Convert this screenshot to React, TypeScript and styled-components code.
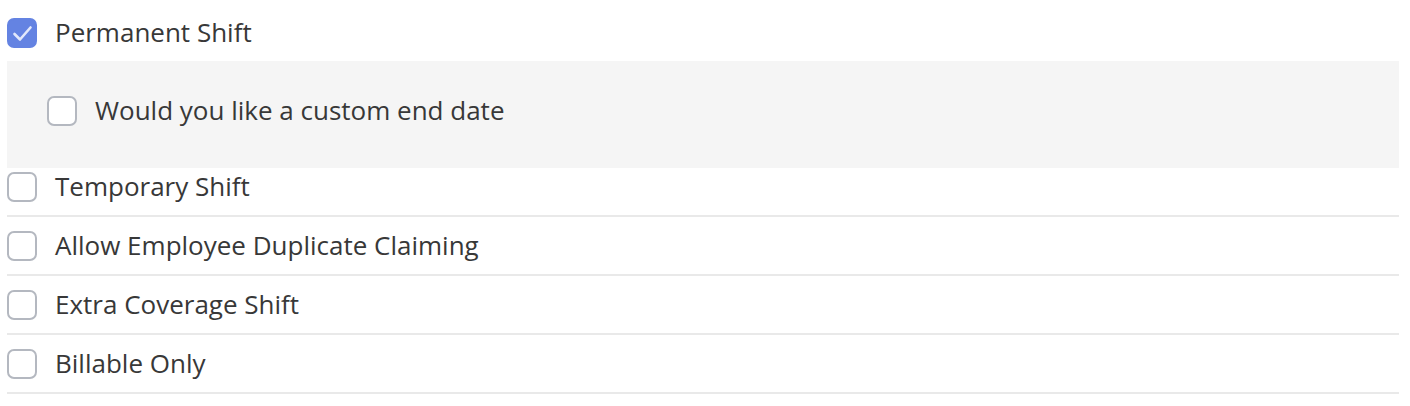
import styled, { createGlobalStyle } from "styled-components";

const GlobalStyle = createGlobalStyle`
  body {
    margin: 0;
    background: #ffffff;
    font-family: "Open Sans", "Liberation Sans", sans-serif;
    color: #383838;
  }
`;

const CheckIcon = () => (
  <svg width="26" height="26" viewBox="0 0 26 26" fill="none">
    <path d="M5.5 14 L11 19.5 L21.5 7.5" stroke="#e2e8fb" strokeWidth="2.6" strokeLinecap="round" strokeLinejoin="round" />
  </svg>
);

const Box = ({ checked }: { checked?: boolean }) => (
  <StyledBox $checked={checked}>{checked && <CheckIcon />}</StyledBox>
);

const Option = ({ label, checked, divider }: { label: string; checked?: boolean; divider?: boolean }) => (
  <StyledOption $divider={divider}>
    <Box checked={checked} />
    <Label>{label}</Label>
  </StyledOption>
);

export default function App() {
  return (
    <>
      <GlobalStyle />
      <StyledList>
        <TopRow>
          <Box checked />
          <Label>Permanent Shift</Label>
        </TopRow>
        <Panel>
          <Box />
          <Label>Would you like a custom end date</Label>
        </Panel>
        <FirstOption>
          <Box />
          <Label>Temporary Shift</Label>
        </FirstOption>
        <Option label="Allow Employee Duplicate Claiming" divider />
        <Option label="Extra Coverage Shift" divider />
        <Option label="Billable Only" divider />
      </StyledList>
    </>
  );
}

const StyledList = styled.div`
  margin-left: 7px;
  width: 1392px;
  display: flex;
  flex-direction: column;
`;

const Row = styled.div`
  display: flex;
  align-items: center;
  gap: 18px;
`;

const TopRow = styled(Row)`
  padding: 18px 0 13px;
`;

const Panel = styled(Row)`
  background: #f5f5f5;
  height: 99px;
  padding: 0 0 8px 40px;
`;

const FirstOption = styled(Row)`
  padding: 4px 0 13px;
  border-bottom: 2px solid #e9e9e9;
`;

const StyledOption = styled(Row)<{ $divider?: boolean }>`
  padding: 14px 0 13px;
  border-bottom: ${(p) => (p.$divider ? "2px solid #e9e9e9" : "none")};
`;

const StyledBox = styled.span<{ $checked?: boolean }>`
  box-sizing: border-box;
  width: 30px;
  height: 30px;
  flex-shrink: 0;
  border-radius: 7px;
  border: 2px solid ${(p) => (p.$checked ? "#6483e2" : "#b4b8c0")};
  background: ${(p) => (p.$checked ? "#6483e2" : "#ffffff")};
  display: flex;
  align-items: center;
  justify-content: center;
`;

const Label = styled.span`
  font-size: 26px;
  line-height: 30px;
  margin-top: -2px;
  color: #383838;
`;
